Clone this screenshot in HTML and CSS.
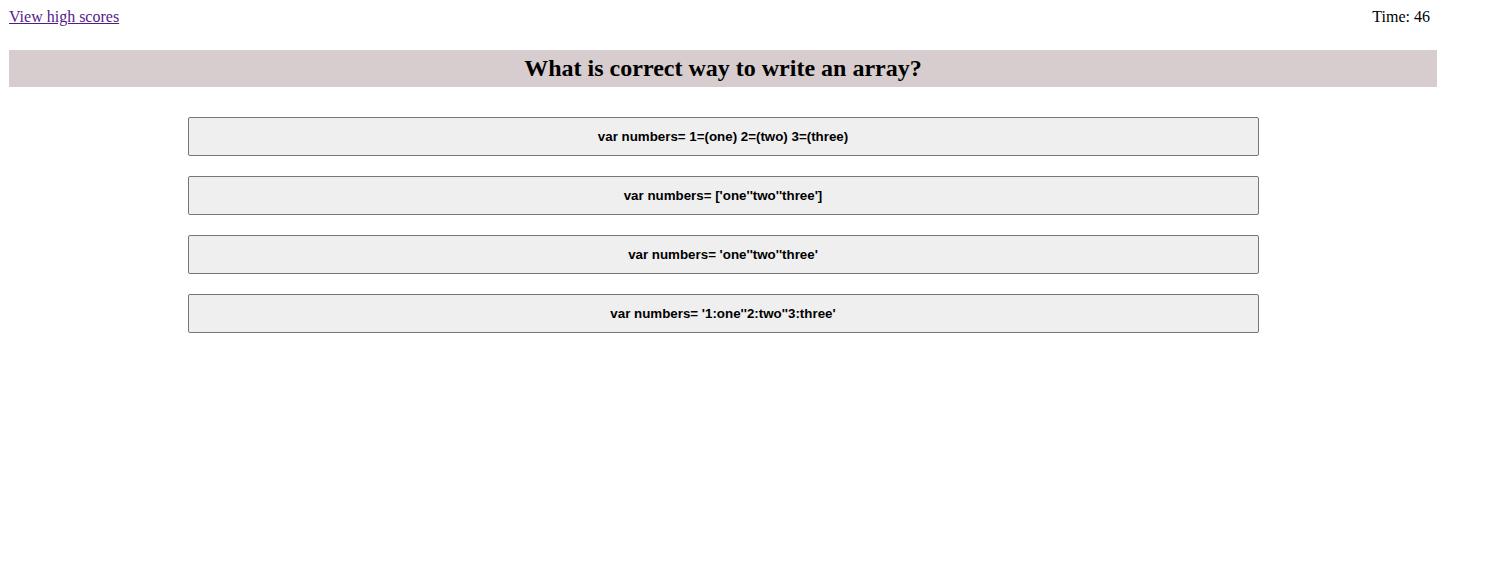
FILE: index.html
```html
<!DOCTYPE html>
<html lang="en">
<head>
<meta charset="utf-8">
<title>Quiz</title>
<link rel="stylesheet" href="styles.css">
</head>
<body>
<div class="page">
  <div class="topbar">
    <a class="scores-link" href="#">View high scores</a>
    <span class="timer">Time: 46</span>
  </div>
  <h2 class="question">What is correct way to write an array?</h2>
  <div class="choices">
    <button class="choice">var numbers= 1=(one) 2=(two) 3=(three)</button>
    <button class="choice">var numbers= ['one''two''three']</button>
    <button class="choice">var numbers= 'one''two''three'</button>
    <button class="choice">var numbers= '1:one''2:two''3:three'</button>
  </div>
</div>
</body>
</html>
```
FILE: styles.css
```css
body {
  margin: 8px;
  font-family: "Liberation Serif", "Times New Roman", serif;
  font-size: 16px;
  color: #000;
  background: #fff;
}
.page {
  width: 1428px;
  margin-left: 1px;
}
.topbar {
  display: flex;
  justify-content: space-between;
  align-items: baseline;
  line-height: 18px;
}
.scores-link {
  color: #551a8b;
}
.timer {
  padding-right: 7px;
}
.question {
  margin: 24px 0 30px;
  padding: 5px 0;
  background: #d7cdce;
  text-align: center;
  font-size: 24px;
  line-height: 27px;
  font-weight: bold;
}
.choices {
  display: flex;
  flex-direction: column;
  align-items: center;
  gap: 20px;
}
.choice {
  width: 75%;
  height: 39px;
  padding: 0 6px;
  background: #efefef;
  border: 1px solid #767676;
  border-radius: 2px;
  font-family: "Liberation Sans", Arial, sans-serif;
  font-size: 13.333px;
  font-weight: bold;
  color: #000;
  text-align: center;
}
```
